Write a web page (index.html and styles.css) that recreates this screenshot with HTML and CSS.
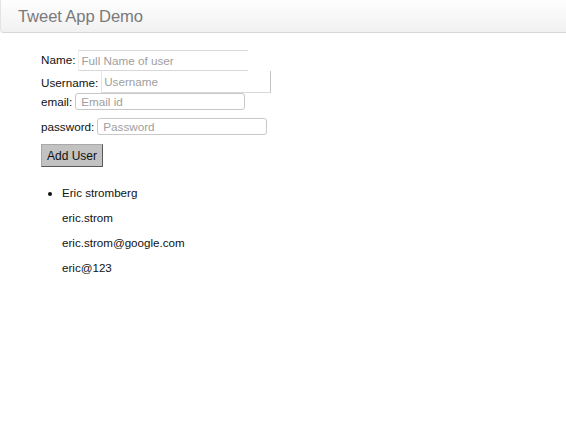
FILE: index.html
```html
<!DOCTYPE html>
<html>
<head>
<meta charset="utf-8">
<link rel="stylesheet" href="styles.css">
</head>
<body>
<div class="navbar"><span class="brand">Tweet App Demo</span></div>
<div class="content">
  <form class="form">
    <div class="row r1"><label>Name:</label><input class="in flat" placeholder="Full Name of user"></div>
    <div class="row r2"><label>Username:</label><input class="in boxy" placeholder="Username"></div>
    <div class="row r3"><label>email:</label><input class="in round" placeholder="Email id"></div>
    <div class="row r4"><label>password:</label><input class="in round" placeholder="Password"></div>
    <div class="row r5"><button type="button" class="btn">Add User</button></div>
  </form>
  <ul class="users">
    <li>
      <p>Eric stromberg</p>
      <p>eric.strom</p>
      <p>eric.strom@google.com</p>
      <p>eric@123</p>
    </li>
  </ul>
</div>
</body>
</html>
```
FILE: styles.css
```css
html, body { margin: 0; padding: 0; background: #fff; }
body { font-family: "Liberation Sans", Arial, sans-serif; color: #111; font-size: 12px; }
.navbar {
  height: 33px;
  box-sizing: border-box;
  border: 1px solid #d6d6d6;
  border-top: none;
  border-left-color: #e4e4e4;
  border-radius: 0 0 0 4px;
  background: linear-gradient(#fefefe, #f1f1f1);
  display: flex;
  align-items: center;
  padding-left: 17px;
  padding-top: 1px;
  margin-right: -2px;
}
.brand { font-size: 16.6px; color: #7a7a7a; letter-spacing: -0.1px; }
.content { padding-left: 41px; }
.form { display: flex; flex-direction: column; margin-top: 17px; }
.row { display: flex; align-items: center; gap: 3px; }
label { color: #111; font-size: 11.7px; }
.in {
  width: 170px;
  box-sizing: border-box;
  font-family: "Liberation Sans", Arial, sans-serif;
  font-size: 11.7px;
  padding: 0 0 0 2px;
  color: #333;
  outline: none;
  margin: 0;
}
.in::placeholder { color: #a0a0a0; }
.flat { height: 21px; border: none; border-top: 1px solid #d8d8d8; border-bottom: 1px solid #d8d8d8; border-left: 1px solid #f0f0f0; }
.boxy { height: 22px; border: none; border-left: 1px solid #e6e6e6; border-right: 1px solid #c4c4c4; border-bottom: 1px solid #d8d8d8; }
.round { height: 17px; border: 1px solid #c8c8c8; border-radius: 3px; padding-left: 5px; }
.r1 label { margin-top: -2px; }
.r4 { margin-top: 8px; }
.r5 { margin-top: 9px; }
.btn {
  font-family: "Liberation Sans", Arial, sans-serif;
  font-size: 12px;
  color: #111;
  background: #c2c2c2;
  border: 1px solid #a8a8a8;
  border-right-color: #5a5a5a;
  border-bottom-color: #5a5a5a;
  height: 23px;
  padding: 0 5px;
  margin: 0;
}
.users { margin: 13px 0 0; padding-left: 21px; font-size: 11.6px; }
.users p { margin: 0; line-height: 25px; }
```
